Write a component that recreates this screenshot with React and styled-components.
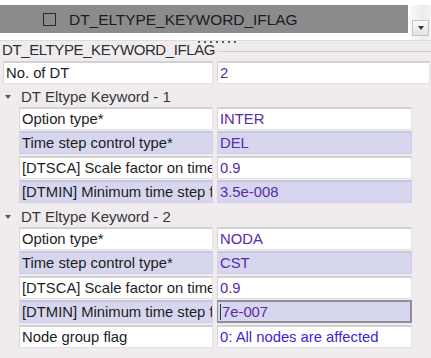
import React from 'react';
import styled, { createGlobalStyle } from 'styled-components';

const GlobalStyle = createGlobalStyle`
  html, body {
    margin: 0;
    padding: 0;
    background: #efebef;
  }
  body {
    font-family: "Liberation Sans", Arial, sans-serif;
  }
`;

const Page = styled.div`
  width: 431px;
  height: 358px;
  overflow: hidden;
  background: #efebef;
`;

const Top = styled.div`
  display: flex;
  height: 35px;
  padding-top: 5px;
  background: #ffffff;
`;

const Combo = styled.div`
  flex: 1;
  display: flex;
  flex-direction: column;
  padding-right: 2px;
`;

const GrayBar = styled.div`
  height: 28px;
  background: #8b8a8c;
  display: flex;
  align-items: center;
  padding-left: 43px;
  gap: 13px;
`;

const Check = styled.span`
  width: 11px;
  height: 11px;
  border: 1.5px solid #2a2a2a;
  background: #8b8a8c;
`;

const BarText = styled.span`
  font-size: 15.5px;
  letter-spacing: -0.05px;
  color: #1c1c1c;
  padding-top: 1px;
`;

const ScrollCol = styled.div`
  width: 21px;
  display: flex;
  align-items: flex-end;
  justify-content: center;
  padding-bottom: 4px;
  box-sizing: border-box;
  background: linear-gradient(to right, #fafafa, #ececec 60%, #f4f4f4);
`;

const DropBtn = styled.div`
  width: 15px;
  height: 14px;
  border: 1px solid #c4c4c4;
  background: linear-gradient(#fbfbfb, #e2e2e2);
  display: flex;
  align-items: center;
  justify-content: center;
  &::after {
    content: '';
    border-left: 3.5px solid transparent;
    border-right: 3.5px solid transparent;
    border-top: 4px solid #3a3a3a;
  }
`;

const Splitter = styled.div`
  height: 2px;
  display: flex;
  justify-content: flex-start;
  align-items: flex-end;
  padding-left: 198px;
  gap: 4px;
  border-top: 1px solid #dedade;
`;

const Dot = styled.span`
  width: 2px;
  height: 2px;
  background: #5a5a5a;
`;

const Legend = styled.div`
  height: 18px;
  display: flex;
  align-items: flex-start;
  gap: 2px;
  padding-left: 2px;
  font-size: 15px;
  line-height: 14px;
  letter-spacing: -0.4px;
  color: #2e2e2e;
  &::after {
    content: '';
    flex: 1;
    height: 1px;
    background: #cfcbcf;
    margin-top: 8px;
  }
`;

const List = styled.div`
  display: flex;
  flex-direction: column;
`;

const Row = styled.div`
  display: grid;
  grid-template-columns: ${p => (p.$top ? '210px 213px' : '194px 195px')};
  column-gap: 4px;
  height: 23px;
  margin-left: ${p => (p.$top ? '3px' : '19px')};
  margin-bottom: 1.5px;
`;

const Cell = styled.div`
  box-sizing: border-box;
  height: 23px;
  padding: 0 2px;
  display: flex;
  align-items: center;
  white-space: nowrap;
  overflow: hidden;
  font-size: 14.8px;
  background: ${p => (p.$alt ? '#d6d6ee' : '#ffffff')};
  border: 1px solid ${p => (p.$alt ? '#d0cfe6' : '#e4e0e4')};
  border-top: 2px solid ${p => (p.$alt ? '#c9c8dc' : '#d2d2d2')};
  border-left-color: #d8d4d8;
`;

const Label = styled(Cell)`
  color: #1d1d1d;
`;

const Value = styled(Cell)`
  color: ${p => (p.$blue ? '#3f1fd6' : '#5a2aa6')};
  ${p =>
    p.$focus &&
    `
    border: 2px solid #8e8e98;
    border-left-width: 1px;
    padding-left: 2px;
  `}
`;

const Caret = styled.span`
  width: 1px;
  height: 16px;
  background: #333;
  margin-right: 1px;
`;

const GroupHead = styled.div`
  height: 21px;
  display: flex;
  align-items: center;
  gap: 10px;
  padding-left: 5px;
  font-size: 15px;
  color: #383838;
  margin-top: ${p => p.$gap || 0}px;
`;

const Arrow = styled.span`
  border-left: 3.5px solid transparent;
  border-right: 3.5px solid transparent;
  border-top: 4px solid #5a5a5a;
  margin-top: 1px;
`;

const groups = [
  {
    title: 'DT Eltype Keyword - 1',
    rows: [
      { label: 'Option type*', value: 'INTER' },
      { label: 'Time step control type*', value: 'DEL', alt: true },
      { label: '[DTSCA] Scale factor on time', value: '0.9' },
      { label: '[DTMIN] Minimum time step fo', value: '3.5e-008', alt: true },
    ],
  },
  {
    title: 'DT Eltype Keyword - 2',
    rows: [
      { label: 'Option type*', value: 'NODA' },
      { label: 'Time step control type*', value: 'CST', alt: true },
      { label: '[DTSCA] Scale factor on time', value: '0.9' },
      { label: '[DTMIN] Minimum time step fo', value: '7e-007', alt: true, focus: true },
      { label: 'Node group flag', value: '0: All nodes are affected', blue: true },
    ],
  },
];

export default function App() {
  return (
    <Page>
      <GlobalStyle />
      <Top>
        <Combo>
          <GrayBar>
            <Check />
            <BarText>DT_ELTYPE_KEYWORD_IFLAG</BarText>
          </GrayBar>
        </Combo>
        <ScrollCol>
          <DropBtn />
        </ScrollCol>
      </Top>
      <Splitter>
        {Array.from({ length: 7 }).map((_, i) => (
          <Dot key={i} />
        ))}
      </Splitter>
      <Legend>DT_ELTYPE_KEYWORD_IFLAG</Legend>
      <List>
        <Row $top>
          <Label>No. of DT</Label>
          <Value>2</Value>
        </Row>
        {groups.map((g, gi) => (
          <React.Fragment key={g.title}>
            <GroupHead $gap={gi === 0 ? 0 : 1}>
              <Arrow />
              {g.title}
            </GroupHead>
            {g.rows.map(r => (
              <Row key={r.label}>
                <Label $alt={r.alt}>{r.label}</Label>
                <Value $alt={r.alt} $blue={r.blue} $focus={r.focus}>
                  {r.focus && <Caret />}
                  {r.value}
                </Value>
              </Row>
            ))}
          </React.Fragment>
        ))}
      </List>
    </Page>
  );
}
